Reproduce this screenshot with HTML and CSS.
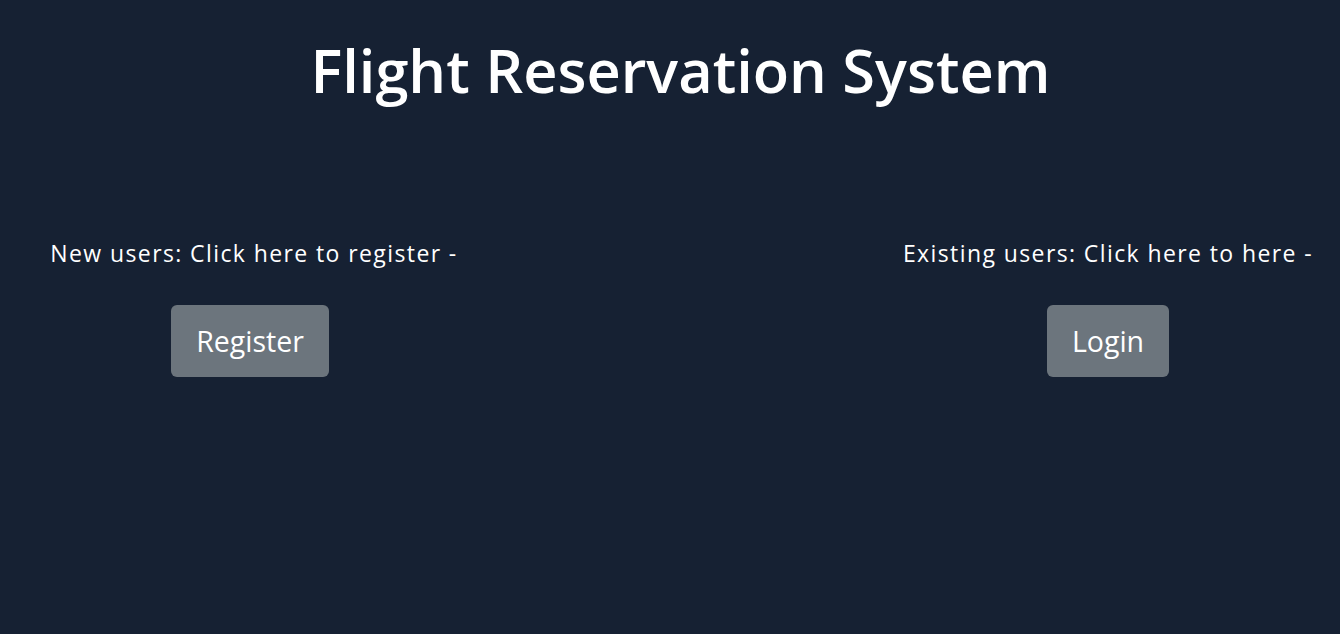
FILE: index.html
```html
<!DOCTYPE html>
<html lang="en">
<head>
<meta charset="utf-8">
<title>Flight Reservation System</title>
<link rel="stylesheet" href="styles.css">
</head>
<body>
<header class="header">
  <h1 class="title">Flight Reservation System</h1>
</header>
<main class="actions">
  <section class="col col-left">
    <p class="prompt prompt-left">New users: Click here to register -</p>
    <button class="btn">Register</button>
  </section>
  <div class="spacer"></div>
  <section class="col col-right">
    <p class="prompt">Existing users: Click here to here -</p>
    <button class="btn">Login</button>
  </section>
</main>
</body>
</html>
```

FILE: styles.css
```css
html, body {
  margin: 0;
  padding: 0;
}
body {
  background: #162133;
  color: #ffffff;
  font-family: "Open Sans", "Noto Sans", sans-serif;
  width: 1340px;
  height: 634px;
  overflow: hidden;
}
.header {
  display: flex;
  justify-content: center;
  padding-top: 26px;
  padding-left: 21px;
}
.title {
  margin: 0;
  font-size: 59.5px;
  font-weight: 600;
  line-height: 88px;
  letter-spacing: 0;
}
.actions {
  display: grid;
  grid-template-columns: 500px 1fr 464px;
  padding-top: 124px;
}
.col {
  display: flex;
  flex-direction: column;
  align-items: center;
}
.prompt {
  margin: 0;
  font-size: 23px;
  line-height: 30px;
  letter-spacing: 1.4px;
}
.prompt-left {
  margin-left: 8px;
}
.btn {
  margin-top: 37px;
  background: #6c757d;
  color: #ffffff;
  border: none;
  border-radius: 6px;
  font-family: inherit;
  font-size: 28.5px;
  line-height: 40px;
  padding: 16px 25px;
}
```
